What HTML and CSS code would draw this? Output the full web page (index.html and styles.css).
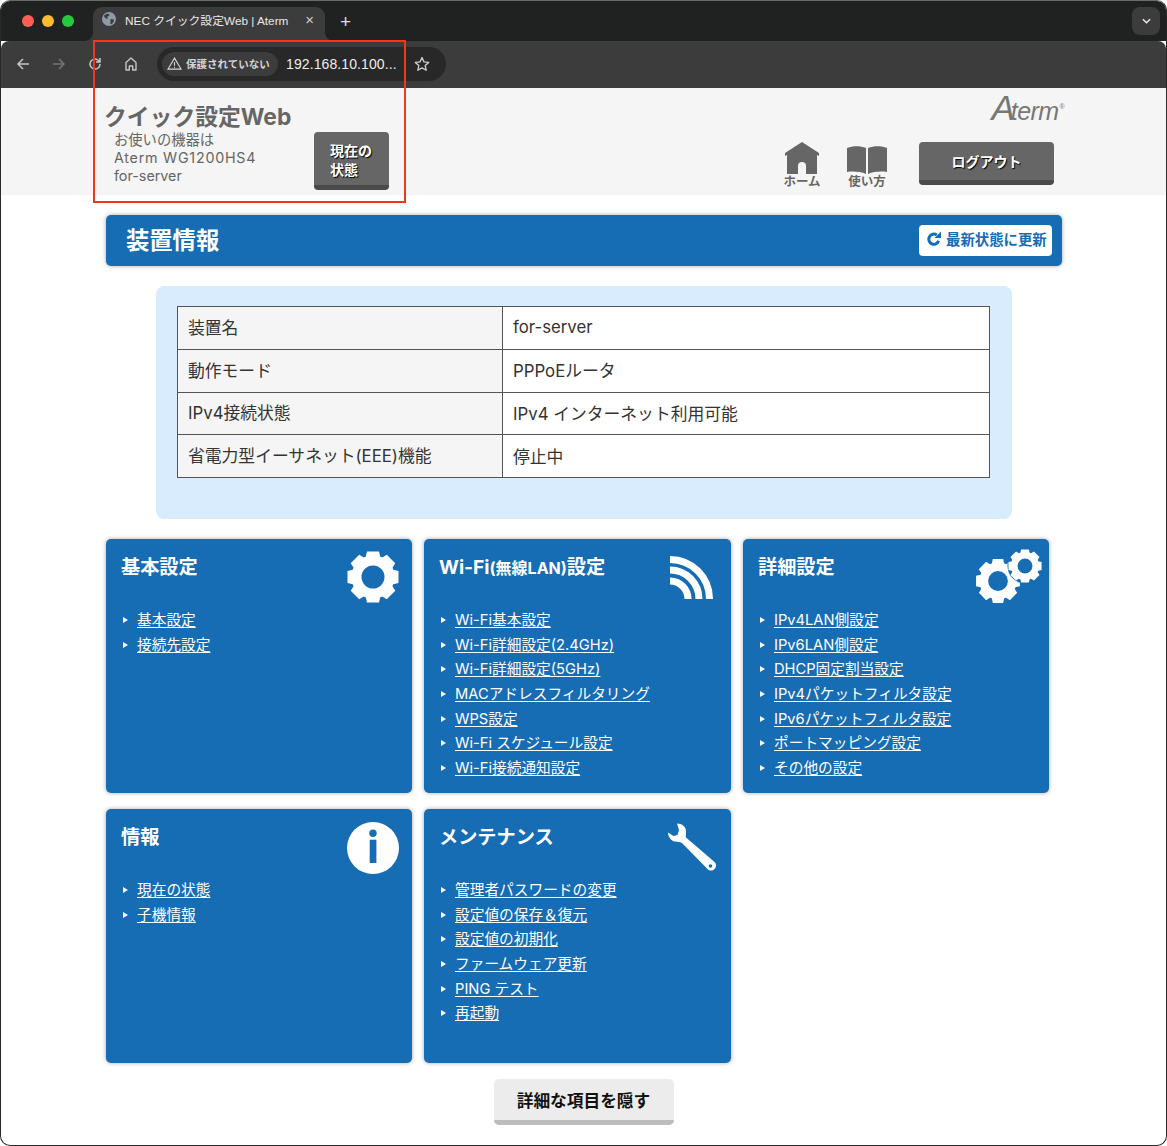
FILE: index.html
```html
<!DOCTYPE html>
<html lang="ja">
<head>
<meta charset="utf-8">
<title>NEC クイック設定Web | Aterm</title>
<link rel="stylesheet" href="styles.css">
</head>
<body>
<div class="window">
  <div class="tabbar">
    <div class="lights"><i class="light red"></i><i class="light yellow"></i><i class="light green"></i></div>
    <div class="tab">
      <svg class="globe" viewBox="0 0 14 14"><circle cx="7" cy="7" r="7" fill="#8f9aa6"/><path d="M2 3.500l3-1.800 2.500.6-.7 1.700-1.600.4.800 2-1.700.4L2.300 5zM8.500 7l3.500.5-.5 2.500-2 2.200-1.200-.5.2-2.500z" fill="#3c3c3c"/></svg>
      <span class="tab-title">NEC クイック設定Web | Aterm</span>
      <span class="tab-close">×</span>
    </div>
    <span class="newtab">+</span>
    <span class="tabmenu"><svg viewBox="0 0 10 6" width="9" height="6"><path d="M1 1l4 4 4-4" fill="none" stroke="#eee" stroke-width="1.600"/></svg></span>
  </div>
  <div class="toolbar">
    <svg class="tool" viewBox="0 0 16 16"><path d="M14 8H3M8 3L3 8l5 5" fill="none" stroke="#c6c6c6" stroke-width="1.500"/></svg>
    <svg class="tool" viewBox="0 0 16 16"><path d="M2 8h11M8 3l5 5-5 5" fill="none" stroke="#757575" stroke-width="1.500"/></svg>
    <svg class="tool" viewBox="0 0 16 16"><path d="M13 8a5 5 0 1 1-1.500-3.500L13 6M13 2v4H9" fill="none" stroke="#c6c6c6" stroke-width="1.500"/></svg>
    <svg class="tool" viewBox="0 0 16 16"><path d="M3 14V6.500L8 2l5 4.500V14h-3.300v-4H6.300v4z" fill="none" stroke="#c6c6c6" stroke-width="1.400" stroke-linejoin="round"/></svg>
    <div class="omnibox">
      <div class="chip">
        <svg class="warn" viewBox="0 0 16 14"><path d="M8 1.200L15 13H1zM8 5.500v4M8 10.500v1.200" fill="none" stroke="#d8d8d8" stroke-width="1.200"/></svg>
        <span>保護されていない</span>
      </div>
      <span class="url">192.168.10.100...</span>
      <svg class="star" viewBox="0 0 16 16"><path d="M8 1.500l2 4.400 4.700.5-3.500 3.200 1 4.700L8 11.900l-4.200 2.400 1-4.700L1.300 6.400 6 5.900z" fill="none" stroke="#d0d0d0" stroke-width="1.300" stroke-linejoin="round"/></svg>
    </div>
  </div>
  <header class="header">
    <div class="brand">
      <h1 class="brand-title">クイック設定Web</h1>
      <div class="brand-row">
        <p class="device">お使いの機器は<br><span class="model">Aterm WG1200HS4</span><br>for-server</p>
        <a class="btn-dark btn-status">現在の<br>状態</a>
      </div>
    </div>
    <div class="head-right">
      <div class="logo"><span class="logo-a">A</span>term<sup>®</sup></div>
      <nav class="head-nav">
        <a class="nav-icon">
          <svg viewBox="0 0 34 32" width="34" height="32"><path d="M17 0L34 11v3l-2-1V32H21V24a4 4 0 0 0-8 0V32H2V13L0 14V11z" fill="#666"/></svg>
          <span>ホーム</span>
        </a>
        <a class="nav-icon nav-book">
          <svg viewBox="0 0 40 30" width="40" height="30"><path d="M0 4C6 1.500 13 1.500 19 4v26C13 27.500 6 27 0 28zM40 4C34 1.500 27 1.500 21 4v26C27 27.500 34 27 40 28z" fill="#666"/></svg>
          <span>使い方</span>
        </a>
        <a class="btn-dark btn-logout">ログアウト</a>
      </nav>
    </div>
  </header>
  <main class="page">
    <section class="titlebar">
      <h2>装置情報</h2>
      <a class="refresh">
        <svg viewBox="0 0 16 16" width="15" height="15"><path d="M13.500 10.500A5.400 5.400 0 1 1 11.500 4.300" fill="none" stroke="#176db4" stroke-width="3.200"/><path d="M9 7.500H16V.5z" fill="#176db4"/></svg>
        最新状態に更新
      </a>
    </section>
    <section class="panel">
      <table class="info">
        <tr><th>装置名</th><td>for-server</td></tr>
        <tr><th>動作モード</th><td>PPPoEルータ</td></tr>
        <tr><th>IPv4接続状態</th><td>IPv4 インターネット利用可能</td></tr>
        <tr><th>省電力型イーサネット(EEE)機能</th><td>停止中</td></tr>
      </table>
    </section>
    <section class="cards">
      <article class="card">
        <h3>基本設定</h3>
        <svg class="card-icon gear" viewBox="-26 -26 52 52"><use href="#gear-shape"/></svg>
        <ul>
          <li><a>基本設定</a></li>
          <li><a>接続先設定</a></li>
        </ul>
      </article>
      <article class="card">
        <h3>Wi-Fi<small>(無線LAN)</small>設定</h3>
        <svg class="card-icon wifi" viewBox="0 0 44 44"><path d="M0 4.500A39.500 39.500 0 0 1 39.500 44M0 15A29 29 0 0 1 29 44M0 26A18 18 0 0 1 18 44" fill="none" stroke="#fff" stroke-width="7"/></svg>
        <ul>
          <li><a>Wi-Fi基本設定</a></li>
          <li><a>Wi-Fi詳細設定(2.4GHz)</a></li>
          <li><a>Wi-Fi詳細設定(5GHz)</a></li>
          <li><a>MACアドレスフィルタリング</a></li>
          <li><a>WPS設定</a></li>
          <li><a>Wi-Fi スケジュール設定</a></li>
          <li><a>Wi-Fi接続通知設定</a></li>
        </ul>
      </article>
      <article class="card">
        <h3>詳細設定</h3>
        <svg class="card-icon gears" viewBox="0 0 66 54">
          <use href="#gear-shape" transform="translate(22 32) scale(.86)"/>
          <circle cx="49" cy="17" r="17.500" fill="#176db4"/>
          <use href="#gear-shape" transform="translate(49 17) scale(.65)"/>
        </svg>
        <ul>
          <li><a>IPv4LAN側設定</a></li>
          <li><a>IPv6LAN側設定</a></li>
          <li><a>DHCP固定割当設定</a></li>
          <li><a>IPv4パケットフィルタ設定</a></li>
          <li><a>IPv6パケットフィルタ設定</a></li>
          <li><a>ポートマッピング設定</a></li>
          <li><a>その他の設定</a></li>
        </ul>
      </article>
      <article class="card">
        <h3>情報</h3>
        <svg class="card-icon infoicon" viewBox="0 0 52 52"><circle cx="26" cy="26" r="26" fill="#fff"/><circle cx="26" cy="11.300" r="3.700" fill="#176db4"/><rect x="22.700" y="17.700" width="6.700" height="23.300" fill="#176db4"/></svg>
        <ul>
          <li><a>現在の状態</a></li>
          <li><a>子機情報</a></li>
        </ul>
      </article>
      <article class="card">
        <h3>メンテナンス</h3>
        <svg class="card-icon wrench" viewBox="0 0 48 48"><path d="M9 .5C14 .5 18 4 18 8C18 11 17.500 13 18 14.500L46.500 39C48.500 41 48.500 44 46.500 46C44.500 48 41.500 48 39.500 46L14 20C12 18.500 9 19.500 6 18.500C2.500 17 0 13 0 9.500L5.500 13L9.500 12L11 7Z" fill="#fff"/><circle cx="42.500" cy="43" r="1.800" fill="#176db4"/></svg>
        <ul>
          <li><a>管理者パスワードの変更</a></li>
          <li><a>設定値の保存＆復元</a></li>
          <li><a>設定値の初期化</a></li>
          <li><a>ファームウェア更新</a></li>
          <li><a>PING テスト</a></li>
          <li><a>再起動</a></li>
        </ul>
      </article>
    </section>
    <div class="more"><a class="btn-more">詳細な項目を隠す</a></div>
  </main>
  <div class="annotation"></div>
</div>
<svg class="defs" width="0" height="0" aria-hidden="true">
  <defs>
    <g id="gear-shape">
      <circle r="16.500" fill="none" stroke="#fff" stroke-width="10"/>
      <g fill="#fff">
        <path id="tooth" d="M-6-25.500H6L7.500-19H-7.500z"/>
        <use href="#tooth" transform="rotate(45)"/>
        <use href="#tooth" transform="rotate(90)"/>
        <use href="#tooth" transform="rotate(135)"/>
        <use href="#tooth" transform="rotate(180)"/>
        <use href="#tooth" transform="rotate(225)"/>
        <use href="#tooth" transform="rotate(270)"/>
        <use href="#tooth" transform="rotate(315)"/>
      </g>
    </g>
  </defs>
</svg>
</body>
</html>
```
FILE: styles.css
```css
* { box-sizing: border-box; }
html, body { margin: 0; padding: 0; background: #fff; }
body {
  width: 1167px;
  height: 1146px;
  overflow: hidden;
  font-family: "Inter", "Noto Sans CJK JP", sans-serif;
  color: #333;
}
a { color: inherit; }
.defs { position: absolute; }

.window {
  position: relative;
  width: 1167px;
  height: 1146px;
  border: 1px solid #2a2a2a;
  border-top-color: #6a6a6a;
  border-radius: 10px;
  overflow: hidden;
  background: #fff;
}

/* browser chrome */
.tabbar {
  display: flex;
  align-items: flex-end;
  height: 40px;
  background: #202221;
  font-family: "Liberation Sans", "Noto Sans CJK JP", sans-serif;
}
.lights {
  display: flex;
  gap: 8px;
  align-self: center;
  width: 92px;
  padding-left: 21px;
}
.light { width: 12px; height: 12px; border-radius: 50%; }
.red { background: #ff5f57; }
.yellow { background: #febc2e; }
.green { background: #28c840; }
.tab {
  position: relative;
  display: flex;
  align-items: center;
  width: 232px;
  height: 34px;
  padding: 0 11px 10px 9px;
  background: #3c3c3c;
  border-radius: 9px 9px 0 0;
  color: #e8e8e8;
  font-size: 11.800px;
}
.tab::before, .tab::after {
  content: "";
  position: absolute;
  bottom: 0;
  width: 8px;
  height: 8px;
}
.tab::before { left: -8px; background: radial-gradient(circle at 0 0, #202221 7.500px, #3c3c3c 8px); }
.tab::after { right: -8px; background: radial-gradient(circle at 100% 0, #202221 7.500px, #3c3c3c 8px); }
.globe { width: 14px; height: 14px; flex: none; }
.tab-title { margin-left: 9px; white-space: nowrap; flex: 1; }
.tab-close { font-size: 15px; color: #ccc; }
.newtab { align-self: center; margin-left: 15px; color: #ddd; font-size: 19px; line-height: 1; }
.tabmenu {
  display: flex;
  align-items: center;
  justify-content: center;
  align-self: center;
  width: 28px;
  height: 28px;
  margin-left: auto;
  margin-right: 6px;
  background: #3c3c3c;
  border-radius: 8px;
}
.toolbar {
  display: flex;
  align-items: center;
  gap: 20px;
  height: 47px;
  padding: 0 0 2px 14px;
  background: #3c3c3c;
  border-radius: 8px 8px 0 0;
  font-family: "Liberation Sans", "Noto Sans CJK JP", sans-serif;
}
.tool { width: 16px; height: 16px; flex: none; }
.omnibox {
  display: flex;
  align-items: center;
  width: 289px;
  height: 34px;
  margin-left: -2px;
  padding: 0 5px;
  background: #282828;
  border-radius: 17px;
  color: #eee;
}
.chip {
  display: flex;
  align-items: center;
  gap: 4px;
  width: 116px;
  height: 24px;
  padding-left: 5px;
  background: #3c3c3c;
  border-radius: 12px;
  font-size: 10.500px;
  font-weight: 700;
  color: #d4d4d4;
  white-space: nowrap;
}
.warn { width: 15px; height: 13px; flex: none; }
.url { margin-left: 8px; font-size: 14px; white-space: nowrap; width: 116px; letter-spacing: .1px; }
.star { width: 16px; height: 16px; margin-left: 12px; flex: none; }

/* page header */
.header {
  display: flex;
  justify-content: space-between;
  height: 107px;
  padding: 14px 112px 0 103px;
  background: #f5f5f5;
  color: #666;
}
.brand { width: 285px; }
.brand-title {
  margin: 0;
  padding-top: 1px;
  font-size: 22.800px;
  line-height: 28px;
  font-weight: 700;
  white-space: nowrap;
}
.brand-row { display: flex; justify-content: space-between; }
.device { margin: 0 0 0 10px; font-size: 14.300px; line-height: 18px; white-space: nowrap; }
.model { letter-spacing: .75px; }
.btn-dark {
  display: block;
  background: #666;
  border-bottom: 5px solid #4a4a4a;
  border-radius: 4px;
  color: #fff;
  font-family: "Liberation Sans", "Noto Sans CJK JP", sans-serif;
  font-weight: 700;
  text-shadow: 1px 1px 1px #000;
}
.btn-status {
  width: 75px;
  height: 58px;
  margin-top: 1px;
  padding: 10px 0 0 16px;
  font-size: 14px;
  line-height: 19px;
}
.head-right {
  display: flex;
  flex-direction: column;
  align-items: flex-end;
}
.logo {
  margin: -8px -10px 2px 0;
  height: 28px;
  font-family: "Liberation Sans", sans-serif;
  font-style: italic;
  font-size: 25px;
  line-height: 28px;
  color: #777;
  letter-spacing: -.6px;
  white-space: nowrap;
}
.logo-a { font-size: 35px; letter-spacing: -4px; }
.logo sup { font-size: 7px; vertical-align: 11px; line-height: 0; font-style: normal; margin-left: 1px; }
.head-nav { display: flex; align-items: flex-start; margin-top: 18px; }
.nav-icon {
  display: flex;
  flex-direction: column;
  align-items: center;
  width: 36px;
  font-size: 12.500px;
  font-weight: 700;
  line-height: 14px;
  font-family: "Liberation Sans", "Noto Sans CJK JP", sans-serif;
}
.nav-icon span { margin-top: 1px; white-space: nowrap; }
.nav-book { width: 40px; margin-left: 27px; padding-top: 2px; }
.btn-logout {
  width: 135px;
  height: 43px;
  margin-left: 32px;
  padding-top: 11px;
  text-align: center;
  font-size: 14px;
  line-height: 18px;
}

/* main */
.page { padding: 20px 0 0 105px; }
.titlebar {
  display: flex;
  align-items: center;
  justify-content: space-between;
  width: 956px;
  height: 51px;
  padding: 0 10px 0 20px;
  background: #176db4;
  border-radius: 5px;
  box-shadow: 0 0 4px rgba(0,0,0,.35);
  color: #fff;
}
.titlebar h2 { margin: 0; font-size: 23.300px; line-height: 30px; font-weight: 700; }
.refresh {
  display: flex;
  align-items: center;
  gap: 5px;
  width: 133px;
  height: 31px;
  padding: 0 0 4px 7px;
  background: #fff;
  border-radius: 4px;
  color: #176db4;
  font-family: "Liberation Sans", "Noto Sans CJK JP", sans-serif;
  font-size: 14.400px;
  font-weight: 700;
  white-space: nowrap;
}
.panel {
  width: 856px;
  height: 233px;
  margin: 20px 0 0 50px;
  padding: 20px 21px;
  background: #d9ecfd;
  border-radius: 8px;
}
.info {
  width: 813px;
  border-collapse: collapse;
  background: #fff;
  font-size: 16.800px;
  color: #333;
}
.info th, .info td {
  height: 42.750px;
  padding: 0 10px 2px;
  border: 1px solid #555;
  text-align: left;
  font-weight: 400;
}
.info td { padding-bottom: 1px; }
.info th { width: 325px; background: #f5f5f5; }
.cards {
  display: grid;
  grid-template-columns: 306px 307px 306px;
  grid-auto-rows: 254px;
  gap: 16px 12px;
  margin-top: 20px;
}
.card {
  position: relative;
  padding: 16px 15px 0;
  background: #176db4;
  border-radius: 5px;
  box-shadow: 0 0 4px rgba(0,0,0,.35);
  color: #fff;
}
.card h3 {
  margin: 0;
  height: 24px;
  font-size: 19.200px;
  line-height: 24px;
  font-weight: 700;
  white-space: nowrap;
}
.card h3 small { font-size: 16px; line-height: 1; font-weight: 700; }
.card ul {
  margin: 29px 0 0;
  padding: 0 0 0 16px;
  list-style: none;
}
.card li {
  position: relative;
  height: 24.700px;
  font-size: 14.700px;
  line-height: 24.700px;
  white-space: nowrap;
}
.card li::before {
  content: "";
  position: absolute;
  left: -14px;
  top: 9px;
  border-left: 5px solid #fff;
  border-top: 3.500px solid transparent;
  border-bottom: 3.500px solid transparent;
}
.card li a { text-decoration: underline; text-underline-offset: 2px; }
.card-icon { position: absolute; display: block; }
.gear { left: 241px; top: 12px; width: 52px; height: 52px; }
.wifi { left: 246px; top: 16px; width: 44px; height: 44px; }
.gears { left: 233px; top: 10px; width: 66px; height: 54px; }
.infoicon { left: 241px; top: 13px; width: 52px; height: 52px; }
.wrench { left: 244px; top: 14px; width: 48px; height: 48px; }
.more { width: 956px; margin-top: 16px; display: flex; justify-content: center; padding-right: 1px; }
.btn-more {
  width: 180px;
  height: 46px;
  padding-top: 12px;
  text-align: center;
  background: #ececec;
  border-bottom: 5px solid #bdbdbd;
  border-radius: 5px;
  color: #111;
  font-size: 16.700px;
  line-height: 20px;
  font-weight: 700;
}

/* red marker drawn over the screenshot */
.annotation {
  position: absolute;
  left: 92px;
  top: 39px;
  width: 313px;
  height: 163px;
  border: 2px solid #f03a17;
  pointer-events: none;
}
```
